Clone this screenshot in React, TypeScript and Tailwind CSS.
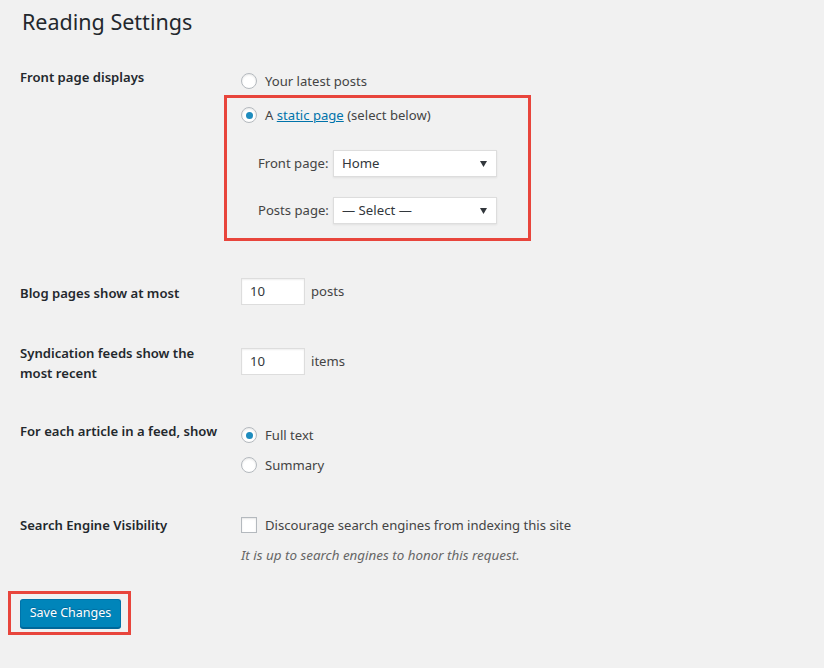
import React from 'react';

const font = { fontFamily: '"Noto Sans", "Open Sans", sans-serif' };

const Radio: React.FC<{ checked?: boolean }> = ({ checked }) => (
  <span className="flex h-4 w-4 shrink-0 items-center justify-center rounded-full border border-[#b4b9be] bg-white shadow-[inset_0_1px_2px_rgba(0,0,0,0.1)]">
    {checked && <span className="h-[7px] w-[7px] rounded-full bg-[#1e8cbe]" />}
  </span>
);

const Select: React.FC<{ value: string }> = ({ value }) => (
  <div className="flex h-[27px] w-[164px] items-center justify-between border border-[#ddd] bg-white pl-2 pr-[7px] text-[13.2px] text-[#32373c] shadow-[0_1px_2px_rgba(0,0,0,0.07)]">
    <span>{value}</span>
    <svg width="7" height="6" viewBox="0 0 7 6" className="mr-[2px]">
      <path d="M0 0 H7 L3.5 6 Z" fill="#32373c" />
    </svg>
  </div>
);

const NumberInput: React.FC<{ value: string }> = ({ value }) => (
  <div className="flex h-[27px] w-[64px] items-center border border-[#ddd] bg-white pl-2 text-[13.2px] text-[#32373c] shadow-[inset_0_1px_2px_rgba(0,0,0,0.07)]">
    {value}
  </div>
);

const Label: React.FC<{ children: React.ReactNode; className?: string }> = ({ children, className = '' }) => (
  <div className={`w-[221px] shrink-0 pr-[10px] text-[13.1px] font-semibold leading-5 text-[#23282d] ${className}`}>{children}</div>
);

const App: React.FC = () => {
  return (
    <div className="min-h-[668px] w-full bg-[#f1f1f1] pl-5 pt-[7px] text-[13.1px] text-[#444]" style={font}>
      <h1 className="pl-[2px] text-[21.5px] font-normal leading-[29px] text-[#23282d]">Reading Settings</h1>

      {/* Front page displays */}
      <div className="mt-[31px] flex">
        <Label>Front page displays</Label>
        <div className="pt-1">
          <div className="flex items-center gap-2 leading-5">
            <Radio />
            <span>Your latest posts</span>
          </div>
          <div className="ml-[-17px] mt-[4px] w-[307px] border-[3px] border-[#e8453c] pb-[14px] pl-[14px] pt-[7px]">
            <div className="flex items-center gap-2 leading-5">
              <Radio checked />
              <span>
                A{' '}
                <a href="#" className="text-[#0073aa] underline">
                  static page
                </a>{' '}
                (select below)
              </span>
            </div>
            <div className="mt-[25px] flex items-center pl-[17px]">
              <span className="w-[75px] shrink-0 whitespace-nowrap">Front page:</span>
              <Select value="Home" />
            </div>
            <div className="mt-5 flex items-center pl-[17px]">
              <span className="w-[75px] shrink-0 whitespace-nowrap">Posts page:</span>
              <Select value="— Select —" />
            </div>
          </div>
        </div>
      </div>

      {/* Blog pages */}
      <div className="mt-[37px] flex">
        <Label className="pt-[5px]">Blog pages show at most</Label>
        <div className="flex items-center gap-[6px]">
          <NumberInput value="10" />
          <span>posts</span>
        </div>
      </div>

      {/* Syndication */}
      <div className="mt-[38px] flex">
        <Label>
          Syndication feeds show the
          <br />
          most recent
        </Label>
        <div className="mt-[5px] flex h-[27px] items-center gap-[6px]">
          <NumberInput value="10" />
          <span>items</span>
        </div>
      </div>

      {/* Feed article */}
      <div className="mt-[38px] flex">
        <Label>For each article in a feed, show</Label>
        <div className="pt-1">
          <div className="flex items-center gap-2 leading-5">
            <Radio checked />
            <span>Full text</span>
          </div>
          <div className="mt-[10px] flex items-center gap-2 leading-5">
            <Radio />
            <span>Summary</span>
          </div>
        </div>
      </div>

      {/* Search engine visibility */}
      <div className="mt-10 flex">
        <Label>Search Engine Visibility</Label>
        <div>
          <div className="flex items-center gap-2 leading-5">
            <span className="h-4 w-4 shrink-0 border border-[#b4b9be] bg-white shadow-[inset_0_1px_2px_rgba(0,0,0,0.1)]" />
            <span>Discourage search engines from indexing this site</span>
          </div>
          <p className="mt-[10px] text-[13.4px] italic leading-5 text-[#666]">It is up to search engines to honor this request.</p>
        </div>
      </div>

      {/* Submit */}
      <div className="ml-[-12px] mt-[26px] inline-block border-[3px] border-[#e8453c] pb-1 pl-[9px] pr-[7px] pt-[5px]">
        <button className="h-[29px] w-[101px] rounded-[3px] border border-[#0073aa] border-b-[#006799] bg-[#0085ba] text-[12.5px] text-white shadow-[0_1px_0_#006799] [text-shadow:0_-1px_1px_#006799]">
          Save Changes
        </button>
      </div>
    </div>
  );
};

export default App;
